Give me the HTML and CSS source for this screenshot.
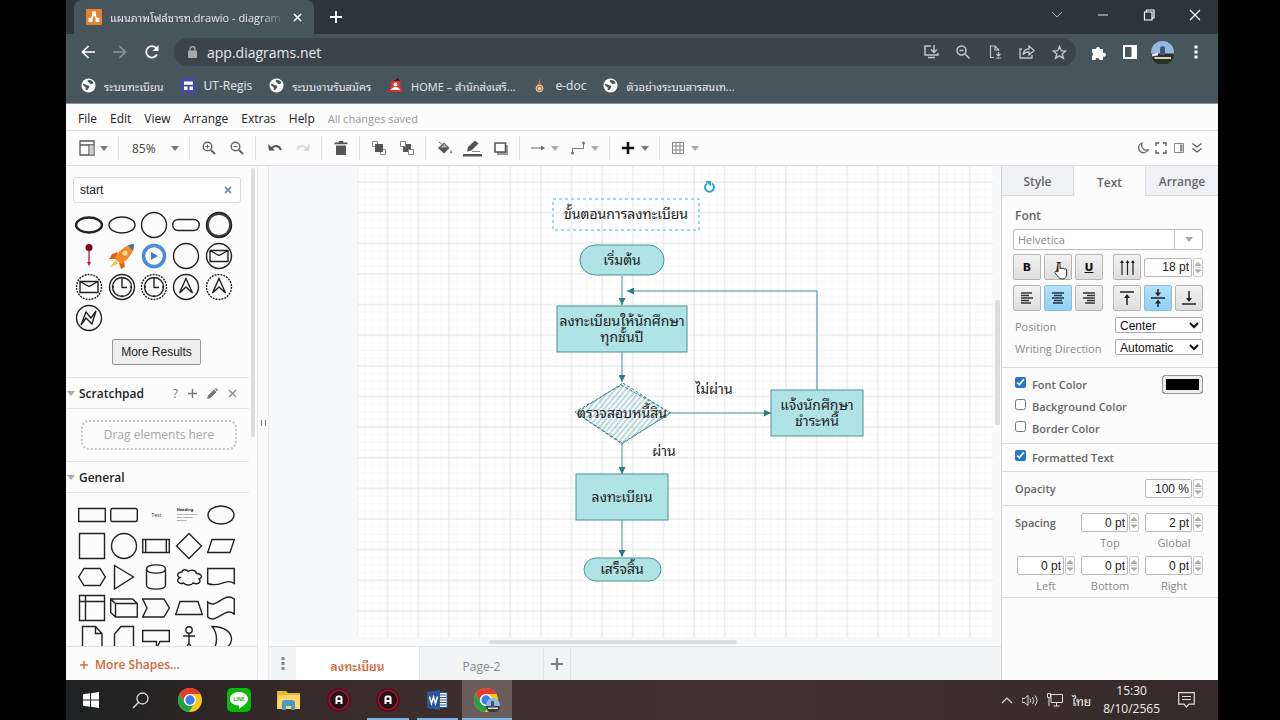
FILE: index.html
```html
<!doctype html>
<html lang="th">
<head>
    <meta charset="UTF-8">
    <meta name="viewport" content="width=device-width, initial-scale=1.0">
    <title>แผนภาพโฟล์ชารท.drawio - diagrams.net</title>
    <link rel="stylesheet" href="styles.css">
</head>
<body>
    <svg class="defs" width="0" height="0">
        <symbol id="caret" viewBox="0 0 8 5"><path d="M0 0h8L4 5z" fill="currentColor"/></symbol>
        <symbol id="globe" viewBox="0 0 16 16">
            <circle cx="8" cy="8" r="7.5" fill="#fff"/>
            <path d="M2 6.500C5 6 5.500 8 8 8c1 .5 1.500 2 0 3-.5 1.500-2 2.500-3 1.500L5 10 2 7.500zM7.500 2.500c2-1 5 .5 6 3-2 .5-3.500 1.500-4.500 0S6 4.500 7.500 2.500z" fill="#47565d"/>
        </symbol>
        <symbol id="spin" viewBox="0 0 10 19">
            <path d="M0 9.500h10" stroke="#ccc"/>
            <path d="M1.500 7L5 3l3.500 4zM1.500 12.500L5 16l3.500-3.500z" fill="#bbb" stroke="#888" stroke-width=".8"/>
        </symbol>
        <symbol id="chrome" viewBox="0 0 24 24">
            <circle cx="12" cy="12" r="12" fill="#fbc816"/>
            <path d="M1.600 6A12 12 0 0 1 22.400 6H12a6 6 0 0 0-5.500 8z" fill="#e33b2e"/>
            <path d="M1.600 6A12 12 0 0 0 11 24l5.500-8.500A6 6 0 0 1 6.800 15z" fill="#22a04b"/>
            <circle cx="12" cy="12" r="6" fill="#fff"/>
            <circle cx="12" cy="12" r="4.700" fill="#3b7ded"/>
        </symbol>
        <symbol id="rec" viewBox="0 0 24 24">
            <circle cx="12" cy="12" r="12" fill="#5e0d1c"/>
            <circle cx="12" cy="12" r="9.500" fill="#241216" stroke="#b5173a" stroke-width="1.200"/>
            <path d="M9.500 16V10a1.500 1.500 0 0 1 1.500-1.500h2A1.500 1.500 0 0 1 14.500 10v6M9.500 13h5" fill="none" stroke="#fff" stroke-width="2"/>
        </symbol>
        <symbol id="clock" viewBox="0 0 28 28">
            <circle cx="14" cy="14" r="9.500"/><path d="M14 6v8.500h5M14 4.500v1.500M14 22v1.500M4.500 14h1.500M22 14h1.500"/>
        </symbol>
    </svg>

    <header class="browser">
        <div class="titlebar">
            <div class="tab">
                <svg width="16" height="16" viewBox="0 0 16 16"><rect width="16" height="16" rx="1" fill="#e8832d"/><path d="M8 5L4.500 11M8 5l3.500 6" stroke="#fff" stroke-width="1.500"/><path d="M6 2.500h4V7H6zM2.500 9h4v4h-4zM9.500 9h4v4h-4z" fill="#fff"/></svg>
                <span class="tab-title">แผนภาพโฟล์ชารท.drawio - diagram</span>
                <button class="plain" aria-label="Close tab"><svg width="9" height="9" viewBox="0 0 9 9"><path d="M1 1l7 7M8 1L1 8" stroke="#fff" stroke-width="1.600"/></svg></button>
            </div>
            <button class="plain new-tab" aria-label="New tab"><svg width="12" height="12" viewBox="0 0 12 12"><path d="M6 0v12M0 6h12" stroke="#fff" stroke-width="1.800"/></svg></button>
            <div class="window-buttons">
                <button class="plain" aria-label="Search tabs"><svg width="12" height="12" viewBox="0 0 12 12"><path d="M1 3l5 5 5-5" fill="none" stroke="#a9b1b5"/></svg></button>
                <button class="plain" aria-label="Minimize"><svg width="12" height="12" viewBox="0 0 12 12"><path d="M1 6h10" stroke="#e3e6e8"/></svg></button>
                <button class="plain" aria-label="Restore"><svg width="12" height="12" viewBox="0 0 12 12"><path d="M1.500 3h7.500v8H1.500zM3.500 3V1h7.500v8H9" fill="none" stroke="#fff" stroke-width="1.200"/></svg></button>
                <button class="plain" aria-label="Close"><svg width="12" height="12" viewBox="0 0 12 12"><path d="M1 1l10 10M11 1L1 11" stroke="#fff" stroke-width="1.200"/></svg></button>
            </div>
        </div>
        <div class="navbar">
            <button class="plain nav" aria-label="Back"><svg width="14" height="14" viewBox="0 0 14 14"><path d="M14 7H2M7.500 1L1.500 7l6 6" fill="none" stroke="#fff" stroke-width="1.700"/></svg></button>
            <button class="plain nav" aria-label="Forward"><svg width="14" height="14" viewBox="0 0 14 14"><path d="M0 7h12M6.500 1l6 6-6 6" fill="none" stroke="#8d989d" stroke-width="1.500"/></svg></button>
            <button class="plain nav" aria-label="Reload"><svg width="14" height="14" viewBox="0 0 14 14"><path d="M12 9.500A5.700 5.700 0 1 1 11.500 3.500" fill="none" stroke="#fff" stroke-width="1.800"/><path d="M13.500 0v6h-6z" fill="#fff"/></svg></button>
            <div class="omnibox">
                <svg width="9" height="12" viewBox="0 0 9 12"><rect y="4.500" width="9" height="7.500" rx="1" fill="#a5abae"/><path d="M2 5V3a2.500 2.500 0 0 1 5 0v2" fill="none" stroke="#a5abae" stroke-width="1.300"/></svg>
                <input type="text" value="app.diagrams.net" aria-label="Address">
                <button class="plain" aria-label="Install"><svg width="15" height="14" viewBox="0 0 15 14"><path d="M7 1H1v9h13V8M4 12.500h7M10 0v7M7 4.500L10 7.500l3-3" fill="none" stroke="#c2c7c9" stroke-width="1.500"/></svg></button>
                <button class="plain" aria-label="Zoom"><svg width="14" height="14" viewBox="0 0 14 14"><circle cx="5.500" cy="5.500" r="4.500" fill="none" stroke="#c2c7c9" stroke-width="1.500"/><path d="M9 9l4.500 4.500M3.500 5.500h4" stroke="#c2c7c9" stroke-width="1.500"/></svg></button>
                <button class="plain" aria-label="Offline"><svg width="13" height="14" viewBox="0 0 13 14"><path d="M5 12.500H1.500V1H6l3.500 3.500V6M6 1v4h3.500M9.500 7v4M7.500 9l2 2 2-2M7 13h5" fill="none" stroke="#c2c7c9" stroke-width="1.200"/></svg></button>
                <button class="plain" aria-label="Share"><svg width="16" height="14" viewBox="0 0 16 14"><path d="M3 4H1v9h12v-3M4 9.500C4.500 6 7 4 10 4V1l5 4.500L10 10V7C7.500 7 5.500 7.500 4 9.500z" fill="none" stroke="#c2c7c9" stroke-width="1.300"/></svg></button>
                <button class="plain" aria-label="Bookmark"><svg width="15" height="15" viewBox="0 0 15 15"><path d="M7.500 1.500l1.700 4.200 4.500.3-3.500 2.900 1.200 4.400-3.900-2.500-3.900 2.500 1.200-4.400L1.300 6l4.500-.3z" fill="none" stroke="#c2c7c9" stroke-width="1.400"/></svg></button>
            </div>
            <button class="plain ext" aria-label="Extensions"><svg width="15" height="15" viewBox="0 0 15 15"><path d="M1 4h4a2 2 0 1 1 4 0h3v4a2 2 0 1 1 0 3.500V15H8.500a2 2 0 0 0-4 0H1v-4a2 2 0 0 0 0-3.500z" fill="#fff"/></svg></button>
            <button class="plain ext" aria-label="Side panel"><svg width="14" height="14" viewBox="0 0 14 14"><path d="M1 1h12v12H1z" fill="none" stroke="#fff" stroke-width="2"/><path d="M8.500 1H13v12H8.500z" fill="#fff"/></svg></button>
            <button class="plain ext" aria-label="Profile"><svg width="23" height="23" viewBox="0 0 23 23"><circle cx="11.500" cy="11.500" r="11.500" fill="#92b8e0"/><path d="M0 12.500h23A11.500 11.500 0 0 1 0 12.500z" fill="#2c3126"/><path d="M1 13l6-1.500v3l-6 1z" fill="#dfe7ea"/><path d="M9 14V7c0-2.500 5-2.500 5 0v7z" fill="#3d5878"/><path d="M3 16h17v2H4z" fill="#d9d2bd"/></svg></button>
            <button class="plain ext" aria-label="Menu"><svg width="4" height="14" viewBox="0 0 4 14"><path d="M.5.500h3v3h-3zM.5 5.500h3v3h-3zM.5 10.500h3v3h-3z" fill="#fff"/></svg></button>
        </div>
        <nav class="bookmarks">
            <a class="thai" href="#"><svg width="15" height="15"><use href="#globe"/></svg>ระบบทะเบียน</a>
            <a href="#"><svg width="15" height="15" viewBox="0 0 15 15"><rect width="15" height="15" rx="1" fill="#4249a8"/><path d="M3 3.500h9v3.200H3zM3 8.500h3.500V12H3zM8.500 8.500H12V12H8.500z" fill="#fff"/></svg>UT-Regis</a>
            <a class="thai" href="#"><svg width="15" height="15"><use href="#globe"/></svg>ระบบงานรับสมัคร</a>
            <a class="thai" href="#"><svg width="15" height="15" viewBox="0 0 15 15"><path d="M2.500 4L8 0l5 3-1 4 1 3 1.500 4H.500L2 10l1.500-3z" fill="#e0312b"/><path d="M5 3l5-3 2 3z" fill="#242424"/><circle cx="7.500" cy="6.500" r="2" fill="#fff"/><path d="M3 12c1-4 8-4 9 0z" fill="#fff"/></svg>HOME – สำนักส่งเสริ...</a>
            <a href="#"><svg width="15" height="15" viewBox="0 0 15 15"><path d="M7.500 0l.8 4.500 2.700 3.500a4 4 0 1 1-7 0l2.700-3.500z" fill="#c4703a"/><circle cx="7.500" cy="10.500" r="3.300" fill="none" stroke="#d8d3c6"/><circle cx="7.500" cy="10.500" r="1.500" fill="#f1d9ad"/></svg>e-doc</a>
            <a class="thai" href="#"><svg width="15" height="15"><use href="#globe"/></svg>ตัวอย่างระบบสารสนเท...</a>
        </nav>
    </header>

    <main class="app">
        <nav class="menubar">
            <a href="#">File</a>
            <a href="#">Edit</a>
            <a href="#">View</a>
            <a href="#">Arrange</a>
            <a href="#">Extras</a>
            <a href="#">Help</a>
            <span class="status">All changes saved</span>
        </nav>

        <div class="toolbar">
            <div class="group first">
                <button class="plain drop" aria-label="View"><span><svg width="16" height="16" viewBox="0 0 16 16"><path d="M1 1h14v14H1zM1 5h14M10 5v10" fill="none" stroke="#555" stroke-width="1.300"/><path d="M10.500 5.500H14.500v9h-4z" fill="#ccc"/></svg></span><svg class="caret"><use href="#caret"/></svg></button>
            </div>
            <div class="group">
                <button class="plain zoom">85%<svg class="caret"><use href="#caret"/></svg></button>
            </div>
            <div class="group">
                <button class="plain tool" aria-label="Zoom in"><svg width="14" height="14" viewBox="0 0 14 14"><circle cx="5.500" cy="5.500" r="4.300" fill="none" stroke="#666" stroke-width="1.500"/><path d="M9 9l4 4" stroke="#666" stroke-width="2"/><path d="M3.500 5.500h4M5.500 3.500v4" stroke="#666"/></svg></button>
                <button class="plain tool" aria-label="Zoom out"><svg width="14" height="14" viewBox="0 0 14 14"><circle cx="5.500" cy="5.500" r="4.300" fill="none" stroke="#666" stroke-width="1.500"/><path d="M9 9l4 4" stroke="#666" stroke-width="2"/><path d="M3.500 5.500h4" stroke="#666"/></svg></button>
            </div>
            <div class="group">
                <button class="plain tool" aria-label="Undo"><svg width="14" height="10" viewBox="0 0 14 10"><path d="M0 1l1 6.500h6z" fill="#555"/><path d="M3.500 5.500C6 2 11 2 13 7" fill="none" stroke="#555" stroke-width="2"/></svg></button>
                <button class="plain tool" aria-label="Redo"><svg width="14" height="10" viewBox="0 0 14 10"><path d="M14 1l-1 6.500H7z" fill="#d2d2d2"/><path d="M10.500 5.500C8 2 3 2 1 7" fill="none" stroke="#d2d2d2" stroke-width="1.500"/></svg></button>
            </div>
            <div class="group">
                <button class="plain tool" aria-label="Delete"><svg width="14" height="14" viewBox="0 0 14 14"><path d="M.5 1.500h4L5 0h4l.5 1.500h4v1.800H.5zM2 4.500h10V14H2z" fill="#555"/></svg></button>
            </div>
            <div class="group">
                <button class="plain tool" aria-label="To front"><svg width="14" height="14" viewBox="0 0 14 14"><path d="M.5.500h5v5h-5zM8.500 8.500h5v5h-5z" fill="#fff" stroke="#888"/><path d="M3 3h8v8H3z" fill="#555"/></svg></button>
                <button class="plain tool" aria-label="To back"><svg width="14" height="14" viewBox="0 0 14 14"><path d="M3 3h8v8H3z" fill="#555"/><path d="M.5.500h5v5h-5zM8.500 8.500h5v5h-5z" fill="#fff" stroke="#888"/></svg></button>
            </div>
            <div class="group">
                <button class="plain tool" aria-label="Fill color"><svg width="16" height="14" viewBox="0 0 16 14"><path d="M1 7l6-5.500L12.500 7 7 12.500z" fill="#555"/><path d="M2 1l5 4M3.500 6.200L7 2.800l3.500 3.400z" stroke="#777" fill="#ddd"/><path d="M14 9c1.500 2 1.500 3.500 0 3.500S12.500 11 14 9z" fill="#888"/></svg></button>
                <button class="plain tool" aria-label="Line color"><svg width="20" height="17" viewBox="0 0 20 17"><path d="M4 11.500l1-4.500 7-6.500 3.500 3L8.500 10.500z" fill="#555"/><path d="M9 11.500h8" stroke="#888"/><path d="M0 14h19v2.500H0z" fill="#555"/></svg></button>
                <button class="plain tool" aria-label="Shadow"><svg width="14" height="13" viewBox="0 0 14 13"><path d="M3 3h11v10H3z" fill="#999"/><path d="M1 1h10.500v9H1z" fill="#fff" stroke="#555" stroke-width="1.600"/></svg></button>
            </div>
            <div class="group">
                <button class="plain drop" aria-label="Connection"><span><svg width="14" height="6" viewBox="0 0 14 6"><path d="M0 3h11" stroke="#666"/><path d="M10 .500L14 3l-4 2.500z" fill="#666"/></svg></span><svg class="caret light"><use href="#caret"/></svg></button>
                <button class="plain drop" aria-label="Waypoints"><span><svg width="14" height="14" viewBox="0 0 14 14"><path d="M1.500 12V7.500h11V2" fill="none" stroke="#777"/><circle cx="1.500" cy="12" r="1.500" fill="#777"/><circle cx="12.500" cy="2" r="1.500" fill="#777"/></svg></span><svg class="caret light"><use href="#caret"/></svg></button>
            </div>
            <div class="group">
                <button class="plain drop" aria-label="Insert"><span><svg width="12" height="12" viewBox="0 0 12 12"><path d="M6 0v12M0 6h12" stroke="#111" stroke-width="2.600"/></svg></span><svg class="caret"><use href="#caret"/></svg></button>
            </div>
            <div class="group">
                <button class="plain drop" aria-label="Table"><span><svg width="12" height="12" viewBox="0 0 12 12"><path d="M.5.500h11v11H.5zM.5 4h11M.5 8h11M4 .5v11M8 .5v11" fill="none" stroke="#888"/></svg></span><svg class="caret light"><use href="#caret"/></svg></button>
            </div>
            <div class="view-buttons">
                <button class="plain" aria-label="Dark mode"><svg width="12" height="12" viewBox="0 0 12 12"><path d="M5 1a5 5 0 1 0 6 7C7 9 3.500 5.500 5 1z" fill="none" stroke="#666" stroke-width="1.300"/></svg></button>
                <button class="plain" aria-label="Fullscreen"><svg width="12" height="12" viewBox="0 0 12 12"><path d="M1 4V1h3M8 1h3v3M11 8v3H8M4 11H1V8" fill="none" stroke="#555" stroke-width="1.300"/></svg></button>
                <button class="plain" aria-label="Format panel"><svg width="12" height="12" viewBox="0 0 12 12"><path d="M1.500 1.500h9v9h-9z" fill="none" stroke="#888"/><path d="M7 2.500h2.500v7H7z" fill="#888"/></svg></button>
                <button class="plain" aria-label="Collapse"><svg width="12" height="12" viewBox="0 0 12 12"><path d="M1.500 1.500L6 5l4.500-3.500M1.500 6.500L6 10l4.500-3.500" fill="none" stroke="#555" stroke-width="1.300"/></svg></button>
            </div>
        </div>

        <div class="workspace">
            <aside class="sidebar">
                <div class="palettes">
                    <div class="search">
                        <input type="text" value="start" aria-label="Search shapes">
                        <button class="plain" aria-label="Clear search"><svg width="8" height="8" viewBox="0 0 8 8"><path d="M1 1l6 6M7 1L1 7" stroke="#7195b4" stroke-width="1.800"/></svg></button>
                    </div>
                    <div class="shapes results">
                        <svg viewBox="0 0 28 28"><ellipse cx="14" cy="14" rx="13" ry="7.500" stroke-width="2.400"/></svg>
                        <svg viewBox="0 0 28 28"><ellipse cx="14" cy="14" rx="13" ry="8"/></svg>
                        <svg viewBox="0 0 28 28"><circle cx="14" cy="14" r="12.500"/></svg>
                        <svg viewBox="0 0 28 28"><rect x=".7" y="8.500" width="26.600" height="11" rx="5.500"/></svg>
                        <svg viewBox="0 0 28 28"><circle cx="14" cy="14" r="11.500" stroke="#444" stroke-width="2.800"/><circle cx="14" cy="14" r="12.500"/></svg>
                        <svg viewBox="0 0 28 28"><path d="M14 6v17" stroke="#c0204a"/><path d="M12 20l2 4 2-4z" fill="#c0204a" stroke="none"/><circle cx="14" cy="5.500" r="3.500" fill="#7d0018" stroke="none"/></svg>
                        <svg viewBox="0 0 28 28"><g stroke="none"><path d="M8 18l-6 7 8-3z" fill="#f8c02c"/><path d="M10 10l-6 2-3 5 7 0zM16 20l1 5-4 2-2-6z" fill="#e2621b"/><path d="M7 17C10 9 17 3 26 2c0 8-5 15-13 20z" fill="#f58a25"/><path d="M20 3l6-1-1 7z" fill="#3872b8"/><circle cx="17" cy="11" r="2.600" fill="#fde0a0"/></g></svg>
                        <svg viewBox="0 0 28 28"><circle cx="14" cy="14" r="10.500" stroke="#4b8add" stroke-width="3.600"/><path d="M11 10l7 4-7 4z" fill="#3c7cd4" stroke="none"/></svg>
                        <svg viewBox="0 0 28 28"><circle cx="14" cy="14" r="12.500"/></svg>
                        <svg viewBox="0 0 28 28"><circle cx="14" cy="14" r="12.500"/><path d="M5 8.500h18v11H5zM5 8.500l9 5 9-5"/></svg>
                        <svg viewBox="0 0 28 28"><circle cx="14" cy="14" r="12.500" stroke-dasharray="2 1"/><path d="M5 8.500h18v11H5zM5 8.500l9 5 9-5"/></svg>
                        <svg viewBox="0 0 28 28"><circle cx="14" cy="14" r="12.500"/><use href="#clock"/></svg>
                        <svg viewBox="0 0 28 28"><circle cx="14" cy="14" r="12.500" stroke-dasharray="2 1"/><use href="#clock"/></svg>
                        <svg viewBox="0 0 28 28"><circle cx="14" cy="14" r="12.500"/><path d="M14 5.500L20.500 20 14 14l-6.500 6z"/></svg>
                        <svg viewBox="0 0 28 28"><circle cx="14" cy="14" r="12.500" stroke-dasharray="2 1"/><path d="M14 5.500L20.500 20 14 14l-6.500 6z"/></svg>
                        <svg viewBox="0 0 28 28"><circle cx="14" cy="14" r="12.500"/><path d="M6 21l5-13 5 6 5-7-4 13-6-6z"/></svg>
                    </div>
                    <button class="more-results">More Results</button>

                    <div class="section-title">
                        <svg class="caret light"><use href="#caret"/></svg>
                        <h2>Scratchpad</h2>
                        <button class="plain">?</button>
                        <button class="plain" aria-label="Add"><svg width="9" height="9" viewBox="0 0 9 9"><path d="M4.500 0v9M0 4.500h9" stroke="#777" stroke-width="1.400"/></svg></button>
                        <button class="plain" aria-label="Edit"><svg width="11" height="11" viewBox="0 0 11 11"><path d="M0 11l1-3.500L7 1.500 9.500 4l-6 6zM7.700 1L9 0l2 2-1 1.300z" fill="#777"/></svg></button>
                        <button class="plain" aria-label="Close"><svg width="9" height="9" viewBox="0 0 9 9"><path d="M1 1l7 7M8 1L1 8" stroke="#888" stroke-width="1.300"/></svg></button>
                    </div>
                    <div class="scratch"><div class="drag-here">Drag elements here</div></div>

                    <div class="section-title">
                        <svg class="caret light"><use href="#caret"/></svg>
                        <h2>General</h2>
                    </div>
                    <div class="shapes general">
                        <svg viewBox="0 0 28 28"><path d="M.7 7.500h26.600v13H.7z"/></svg>
                        <svg viewBox="0 0 28 28"><rect x=".7" y="7.500" width="26.600" height="13" rx="2"/></svg>
                        <span class="mini-text">Text</span>
                        <span class="mini-heading"><b>Heading</b>Lorem ipsum dolor sit amet, consectetur adipisicing</span>
                        <svg viewBox="0 0 28 28"><ellipse cx="14" cy="14" rx="13" ry="9"/></svg>
                        <svg viewBox="0 0 28 28"><path d="M1.500 1.500h25v25h-25z"/></svg>
                        <svg viewBox="0 0 28 28"><circle cx="14" cy="14" r="12.500"/></svg>
                        <svg viewBox="0 0 28 28"><path d="M.7 7.500h26.600v13H.7zM3.700 7.500v13M24.300 7.500v13"/></svg>
                        <svg viewBox="0 0 28 28"><path d="M14 1.500L26.500 14 14 26.500 1.500 14z"/></svg>
                        <svg viewBox="0 0 28 28"><path d="M5 7.500h22.300L23 20.500H.7z"/></svg>
                        <svg viewBox="0 0 28 28"><path d="M6 5.500h16l5.300 8.500L22 22.500H6L.7 14z"/></svg>
                        <svg viewBox="0 0 28 28"><path d="M4.500 2.500L23.500 14 4.500 26z"/></svg>
                        <svg viewBox="0 0 28 28"><path d="M4.500 6v16c0 5.500 19 5.500 19 0V6M4.500 6c0-5.500 19-5.500 19 0s-19 5.500-19 0"/></svg>
                        <svg viewBox="0 0 28 28"><path d="M7 9C3 9 .5 13 5 14.500 0 17 4 22 8.500 20c3 3 8 2.500 9.500 0 5 2 9-1 6-4 5-2 1.500-6-2.500-5.500-1-4-6-4-8-2C11 6 7.500 6 7 9z"/></svg>
                        <svg viewBox="0 0 28 28"><path d="M.7 5.500h26.600v15c-9-6-14 5-26.600 0z"/></svg>
                        <svg viewBox="0 0 28 28"><path d="M1.500 1.500h25v25h-25zM1.500 7.500h25M7.500 1.500v25"/></svg>
                        <svg viewBox="0 0 28 28"><path d="M.7 5h22l4.600 4.500V23H5.500L.7 18.500zM.7 5l4.800 4.500h21.800M5.500 9.500V23"/></svg>
                        <svg viewBox="0 0 28 28"><path d="M.7 5H22l5.300 9L22 23H.7L5 14z"/></svg>
                        <svg viewBox="0 0 28 28"><path d="M5 7.500h18l4.300 13H.7z"/></svg>
                        <svg viewBox="0 0 28 28"><path d="M.7 8c9 8 16-11 26.600-3v15C18 12 9 31 .7 23z"/></svg>
                        <svg viewBox="0 0 28 28"><path d="M4.500 1.500h13l6.500 7v19.500H4.500zM17.500 1.500v7H24"/></svg>
                        <svg viewBox="0 0 28 28"><path d="M11 1.500h12.500V28h-19V9z"/></svg>
                        <svg viewBox="0 0 28 28"><path d="M.7 5.500h26.600v11H18l-3.500 7v-7H.7z"/></svg>
                        <svg viewBox="0 0 28 28"><circle cx="14" cy="5" r="3.200"/><path d="M14 8v10M8 11h12M14 18l-5 9M14 18l5 9"/></svg>
                        <svg viewBox="0 0 28 28"><path d="M5 1.500c26 0 26 25 0 25 6-7 6-18 0-25z"/></svg>
                    </div>
                    <span class="thumb side-thumb"></span>
                </div>
                <a class="more-shapes" href="#"><svg width="8" height="8" viewBox="0 0 8 8"><path d="M4 0v8M0 4h8" stroke="currentColor" stroke-width="1.400"/></svg>More Shapes...</a>
            </aside>
            <div class="splitter"></div>

            <section class="editor">
                <div class="canvas">
                    <svg class="diagram">
                        <defs>
                            <pattern id="grid" width="40" height="40" patternUnits="userSpaceOnUse" patternTransform="translate(88 16) scale(.766)">
                                <path d="M10 0v40M20 0v40M30 0v40M0 10h40M0 20h40M0 30h40" stroke="#f5f5f6"/>
                                <path d="M0 0v40M40 0v40M0 0h40M0 40h40" stroke="#e0e1e3" stroke-width="1.300"/>
                            </pattern>
                            <pattern id="hatch" width="4" height="4" patternUnits="userSpaceOnUse" patternTransform="rotate(40)">
                                <path d="M1 0v4" stroke="#7db9bc"/>
                            </pattern>
                            <marker id="arrow" markerWidth="8" markerHeight="7" refX="7" refY="3.500" orient="auto" markerUnits="userSpaceOnUse"><path d="M0 0l7 3.500L0 7z" fill="#2c7d80"/></marker>
                        </defs>
                        <rect x="88" width="100%" height="100%" fill="#fff"/>
                        <rect x="88" width="100%" height="100%" fill="url(#grid)"/>
                        <g class="edges">
                            <path d="M353 110v29"/>
                            <path d="M353 186v30"/>
                            <path d="M353 278v30"/>
                            <path d="M353 354v37"/>
                            <path d="M402 247h100"/>
                            <path d="M548 224V125H358"/>
                        </g>
                        <g class="nodes">
                            <rect x="311" y="79" width="84" height="30" rx="15"/>
                            <rect x="288" y="140" width="130" height="46"/>
                            <rect x="502" y="224" width="92" height="46"/>
                            <rect x="307" y="308" width="92" height="46"/>
                            <rect x="315" y="392" width="77" height="23" rx="12"/>
                        </g>
                        <path class="sketch" d="M354 217l47 30-48 31-46-31z" fill="url(#hatch)"/>
                        <path class="sketch" d="M352 219l50 28-49 30-47-31z" fill="none"/>
                        <rect class="selection" x="284" y="33" width="146" height="31"/>
                        <path d="M443 17.500a4.500 4.500 0 1 1-5 0" fill="none" stroke="#29a3dc" stroke-width="2"/>
                        <path d="M436 15h6v5.500z" fill="#29a3dc"/>
                        <g class="labels">
                            <text x="357" y="53">ขั้นตอนการลงทะเบียน</text>
                            <text x="353" y="99">เริ่มต้น</text>
                            <text x="353" y="160">ลงทะเบียนให้นักศึกษา</text>
                            <text x="353" y="176">ทุกชั้นปี</text>
                            <text x="353" y="252">ตรวจสอบหนี้สิน</text>
                            <text x="445" y="228">ไม่ผ่าน</text>
                            <text x="395" y="290">ผ่าน</text>
                            <text x="548" y="244">แจ้งนักศึกษา</text>
                            <text x="548" y="260">ชำระหนี้</text>
                            <text x="353" y="336">ลงทะเบียน</text>
                            <text x="353" y="408">เสร็จสิ้น</text>
                        </g>
                    </svg>
                    <span class="thumb right-thumb"></span>
                    <span class="thumb bottom-thumb"></span>
                </div>
                <nav class="pages">
                    <button class="plain pages-menu" aria-label="Pages"><svg width="4" height="13" viewBox="0 0 4 13"><path d="M.5 0h3v3h-3zM.5 5h3v3h-3zM.5 10h3v3h-3z" fill="#888"/></svg></button>
                    <a class="page active" href="#">ลงทะเบียน</a>
                    <a class="page" href="#">Page-2</a>
                    <button class="plain add-page" aria-label="Insert page"><svg width="12" height="12" viewBox="0 0 12 12"><path d="M6 0v12M0 6h12" stroke="#808080" stroke-width="2.200"/></svg></button>
                </nav>
            </section>

            <aside class="format">
                <div class="format-tabs">
                    <button class="plain">Style</button>
                    <button class="plain active">Text</button>
                    <button class="plain">Arrange</button>
                </div>
                <div class="panel font-panel">
                    <h3>Font</h3>
                    <button class="font-family"><span>Helvetica</span><i><svg class="caret light"><use href="#caret"/></svg></i></button>
                    <div class="row">
                        <div class="button-set">
                            <button class="btn bold">B</button>
                            <button class="btn italic">I</button>
                            <button class="btn underline">U</button>
                        </div>
                        <div class="button-set">
                            <button class="btn" aria-label="Vertical text"><svg width="17" height="16" viewBox="0 0 17 16"><path d="M3 2v14M8.500 2v14M14 2v14" stroke="#222" stroke-width="1.200"/><path d="M1 4l2-3 2 3zM6.500 4l2-3 2 3zM12 4l2-3 2 3z" fill="#222"/></svg></button>
                            <div class="number size"><input type="text" value="18 pt" aria-label="Font size"><svg><use href="#spin"/></svg></div>
                        </div>
                        <svg class="pointer" width="14" height="18" viewBox="0 0 14 18"><path d="M4 10V2c0-1.500 2-1.500 2 0v5c0-1.500 2-1.500 2.200 0 .3-1.300 2-1.200 2.200.3.500-1 2.200-.8 2.200.7v4c0 3-1.500 5-4 5S5 16 4 14.500L1 11c-1-1.500 1-2.500 3-1z" fill="#fff" stroke="#333"/></svg>
                    </div>
                    <div class="row">
                        <div class="button-set">
                            <button class="btn" aria-label="Left"><svg width="14" height="12" viewBox="0 0 14 12"><path d="M1 1h11M1 3.500h8M1 6h12M1 8.500h8M1 11h10" stroke="#333" stroke-width="1.400"/></svg></button>
                            <button class="btn on" aria-label="Center"><svg width="14" height="12" viewBox="0 0 14 12"><path d="M1 1h12M3 3.500h8M1 6h12M3 8.500h8M2 11h10" stroke="#234" stroke-width="1.400"/></svg></button>
                            <button class="btn" aria-label="Right"><svg width="14" height="12" viewBox="0 0 14 12"><path d="M1 1h12M5 3.500h8M1 6h12M5 8.500h8M3 11h10" stroke="#333" stroke-width="1.400"/></svg></button>
                        </div>
                        <div class="button-set">
                            <button class="btn" aria-label="Top"><svg width="14" height="14" viewBox="0 0 14 14"><path d="M0 1h14M7 5v9" stroke="#222" stroke-width="1.500"/><path d="M4 7l3-4 3 4z" fill="#222"/></svg></button>
                            <button class="btn on" aria-label="Middle"><svg width="14" height="18" viewBox="0 0 14 18"><path d="M0 9h14M7 0v4M7 14v4" stroke="#222" stroke-width="1.500"/><path d="M4 3.500l3 4 3-4zM4 14.500l3-4 3 4z" fill="#222"/></svg></button>
                            <button class="btn" aria-label="Bottom"><svg width="14" height="14" viewBox="0 0 14 14"><path d="M0 13h14M7 0v8" stroke="#222" stroke-width="1.500"/><path d="M4 7l3 4 3-4z" fill="#222"/></svg></button>
                        </div>
                    </div>
                    <div class="row option">
                        <label for="position">Position</label>
                        <select id="position"><option>Center</option></select>
                    </div>
                    <div class="row option">
                        <label for="direction">Writing Direction</label>
                        <select id="direction"><option>Automatic</option></select>
                    </div>
                </div>
                <div class="panel checks">
                    <div class="check">
                        <input type="checkbox" id="font-color" checked><label for="font-color">Font Color</label>
                        <button class="swatch" aria-label="Black"></button>
                    </div>
                    <div class="check"><input type="checkbox" id="background-color"><label for="background-color">Background Color</label></div>
                    <div class="check"><input type="checkbox" id="border-color"><label for="border-color">Border Color</label></div>
                </div>
                <div class="panel formatted">
                    <div class="check"><input type="checkbox" id="formatted" checked><label for="formatted">Formatted Text</label></div>
                </div>
                <div class="panel opacity">
                    <label for="opacity-value">Opacity</label>
                    <div class="number"><input type="text" id="opacity-value" value="100 %"><svg><use href="#spin"/></svg></div>
                </div>
                <div class="panel spacing">
                    <h3>Spacing</h3>
                    <div class="field"><div class="number"><input type="text" id="top" value="0 pt"><svg><use href="#spin"/></svg></div><label for="top">Top</label></div>
                    <div class="field"><div class="number"><input type="text" id="global" value="2 pt"><svg><use href="#spin"/></svg></div><label for="global">Global</label></div>
                    <div class="field"><div class="number"><input type="text" id="left" value="0 pt"><svg><use href="#spin"/></svg></div><label for="left">Left</label></div>
                    <div class="field"><div class="number"><input type="text" id="bottom" value="0 pt"><svg><use href="#spin"/></svg></div><label for="bottom">Bottom</label></div>
                    <div class="field"><div class="number"><input type="text" id="right" value="0 pt"><svg><use href="#spin"/></svg></div><label for="right">Right</label></div>
                </div>
            </aside>
        </div>
    </main>

    <footer class="taskbar">
        <div class="tasks">
            <button class="plain" aria-label="Start"><svg width="16" height="16" viewBox="0 0 16 16"><path d="M0 2.300l7-1v6.200H0zM8 1.200L16 0v7.500H8zM0 8.500h7v6.200l-7-1zM8 8.500h8V16l-8-1.200z" fill="#fff"/></svg></button>
            <button class="plain" aria-label="Search"><svg width="17" height="17" viewBox="0 0 17 17"><circle cx="10.500" cy="6.500" r="5.500" fill="none" stroke="#ddd" stroke-width="1.300"/><path d="M6.500 10.500L1 16" stroke="#ddd" stroke-width="1.500"/></svg></button>
            <button class="plain" aria-label="Chrome"><svg width="24" height="24"><use href="#chrome"/></svg></button>
            <button class="plain" aria-label="Line"><svg width="24" height="24" viewBox="0 0 24 24"><rect width="24" height="24" rx="5" fill="#0bb60b"/><path d="M12 4c5 0 9 3 9 7 0 4-4 6-9 10v-3.500c-5 0-9-2.500-9-6.500s4-7 9-7z" fill="#fff"/><text x="12" y="13" text-anchor="middle" class="line-logo">LINE</text></svg></button>
            <button class="plain" aria-label="Explorer"><svg width="23" height="20" viewBox="0 0 23 20"><path d="M0 1h9l2 2h12v16H0z" fill="#eab42f"/><path d="M1 5h22v14H0z" fill="#ffd765"/><path d="M5 20v-7c0-2 1-3 3-3h7c2 0 3 1 3 3v7h-4v-4H9v4z" fill="#4a97c9"/></svg></button>
            <button class="plain" aria-label="Recorder"><svg width="24" height="24"><use href="#rec"/></svg></button>
            <button class="plain open" aria-label="Recorder window"><svg width="24" height="24"><use href="#rec"/></svg></button>
            <button class="plain open" aria-label="Word"><svg width="21" height="20" viewBox="0 0 21 20"><path d="M10 2.500h10v15H10z" fill="#fff" stroke="#2b579a"/><path d="M13 5h6M13 7.500h6M13 10h6M13 12.500h6M13 15h6" stroke="#2b579a"/><path d="M0 2l13-2v20L0 18z" fill="#2b579a"/><path d="M2.500 6.500l2 7 2-6.500 2 6.500 2-7" fill="none" stroke="#fff" stroke-width="1.400"/></svg></button>
            <button class="plain open focused" aria-label="Chrome window"><svg width="27" height="24" viewBox="0 0 27 24"><use href="#chrome" width="24" height="24"/><circle cx="19" cy="17" r="7" fill="#8fb7de"/><path d="M12 18h14a7 7 0 0 1-14 0z" fill="#333a3a"/><path d="M17 19v-5c0-1.500 3-1.500 3 0v5z" fill="#34506f"/><path d="M14 19.500h10v1.500H14z" fill="#e3e0d4"/></svg></button>
        </div>
        <div class="tray">
            <svg width="12" height="7" viewBox="0 0 12 7"><path d="M1 6l5-5 5 5" fill="none" stroke="#ddd" stroke-width="1.200"/></svg>
            <svg width="16" height="13" viewBox="0 0 16 13"><path d="M0 4.500h2.500L6 1.500v10l-3.500-3H0z" fill="none" stroke="#ddd"/><path d="M8 4.500q1.500 2 0 4M10.500 3q2.500 3.500 0 7M13 1.500q4 5 0 10" fill="none" stroke="#ddd"/></svg>
            <svg width="16" height="14" viewBox="0 0 16 14"><path d="M4 1.500h11.500v8H4zM9.500 10v3M6.500 13h6M.5.500h3v4h-3zM2 5v8" fill="none" stroke="#ddd"/></svg>
            <span class="lang">ไทย</span>
            <time>15:30<br>8/10/2565</time>
            <svg width="17" height="16" viewBox="0 0 17 16"><path d="M.7.700h15.600v11.500H11L8.500 15 6 12.200H.7zM4 4.500h9M4 7.500h9" fill="none" stroke="#ddd" stroke-width="1.200"/></svg>
        </div>
    </footer>
</body>
</html>
```
FILE: styles.css
```css
* {
    box-sizing: border-box;
}

body {
    margin: 0;
    padding: 0 62px 0 66px;
    height: 100vh;
    display: flex;
    flex-direction: column;
    background: #000;
    color: #222;
    font-family: "Open Sans", "Noto Sans", "Noto Sans Thai Looped", "Noto Sans Thai", sans-serif;
    font-size: 12px;
}

a {
    color: inherit;
    text-decoration: none;
}

h2,
h3 {
    margin: 0;
    font-size: 12px;
    font-weight: 600;
}

input,
button,
select {
    font: inherit;
    color: inherit;
    min-width: 0;
}

svg {
    display: block;
    flex: none;
}

.defs {
    position: absolute;
}

.plain {
    display: flex;
    align-items: center;
    justify-content: center;
    padding: 0;
    border: 0;
    background: none;
}

/* browser chrome */
.browser {
    background: #47565d;
    color: #e6eaec;
    border-bottom: 1px solid #8b9498;
}

.titlebar {
    display: flex;
    align-items: stretch;
    height: 34px;
    padding-left: 8px;
    background: #2b363c;
}

.tab {
    display: flex;
    align-items: center;
    gap: 8px;
    width: 240px;
    padding: 0 12px;
    border-radius: 8px 8px 0 0;
    background: #47565d;
}

.tab-title {
    flex: 1;
    overflow: hidden;
    font-size: 11px;
    white-space: nowrap;
    -webkit-mask-image: linear-gradient(to right, #000 85%, transparent);
    mask-image: linear-gradient(to right, #000 85%, transparent);
}

.new-tab {
    width: 44px;
}

.window-buttons {
    display: flex;
    margin-left: auto;
}

.window-buttons button {
    width: 46px;
    padding-bottom: 4px;
}

.navbar {
    display: flex;
    align-items: center;
    height: 36px;
    padding: 0 10px 0 6px;
}

.nav {
    width: 32px;
}

.omnibox {
    display: flex;
    align-items: center;
    gap: 18px;
    flex: 1;
    height: 28px;
    margin: 0 12px 0 6px;
    padding: 0 10px 0 14px;
    border-radius: 14px;
    background: #39454a;
}

.omnibox > svg {
    margin-right: -8px;
}

.omnibox input {
    flex: 1;
    padding: 0;
    border: 0;
    outline: 0;
    background: none;
    font-size: 14px;
}

.omnibox button {
    width: 14px;
}

.ext {
    width: 20px;
    margin-right: 12px;
}

.ext:last-child {
    width: 24px;
    margin: 0;
}

.bookmarks {
    display: flex;
    align-items: center;
    gap: 17px;
    height: 33px;
    padding: 0 15px 2px;
    white-space: nowrap;
}

.bookmarks a {
    display: flex;
    align-items: center;
    gap: 8px;
}

.bookmarks .thai {
    font-size: 11px;
}

/* application */
.app {
    flex: 1;
    min-height: 0;
    display: flex;
    flex-direction: column;
    background: #fcfcfc;
}

.menubar {
    display: flex;
    align-items: center;
    gap: 13px;
    height: 27px;
    padding: 2px 12px 0;
    border-bottom: 1px solid #e0e0e0;
}

.status {
    color: #999;
    font-size: 11px;
}

.toolbar {
    display: flex;
    align-items: center;
    height: 35px;
    border-bottom: 1px solid #dadce0;
    color: #444;
}

.group {
    display: flex;
    align-items: center;
    height: 24px;
    padding: 0 4px 0 5px;
    border-right: 1px solid #e2e2e2;
}

.group:nth-last-child(2) {
    border: 0;
}

.group.first {
    padding-left: 8px;
}

.tool {
    width: 28px;
}

.drop {
    margin-right: 6px;
}

.drop span {
    display: flex;
    justify-content: center;
    width: 26px;
}

.caret {
    width: 8px;
    height: 5px;
    color: #777;
}

.caret.light {
    color: #aaa;
}

.zoom {
    justify-content: space-between;
    width: 47px;
    margin: 0 6px 0 8px;
}

.view-buttons {
    display: flex;
    gap: 6px;
    margin-left: auto;
    padding-right: 15px;
}

.workspace {
    flex: 1;
    min-height: 0;
    display: flex;
}

.sidebar {
    display: flex;
    flex-direction: column;
    width: 192px;
    border-right: 1px solid #e4e4e6;
}

.palettes {
    position: relative;
    flex: 1;
    min-height: 0;
    overflow: hidden;
}

.search {
    display: flex;
    align-items: center;
    height: 26px;
    margin: 11px 16px 6px 7px;
    padding: 0 8px 0 6px;
    border: 1px solid #d8dbe0;
    border-radius: 3px;
    background: #fff;
    font-family: "Liberation Sans", sans-serif;
}

.search input {
    flex: 1;
    padding: 0;
    border: 0;
    outline: 0;
    background: none;
}

.shapes {
    display: grid;
    grid-template-columns: repeat(5, 1fr);
    grid-auto-rows: 31px;
    place-items: center;
}

.shapes > svg {
    width: 28px;
    height: 28px;
    fill: none;
    stroke: #222;
    stroke-width: 1.4;
}

.results {
    margin: 0 22px 0 7px;
}

.general {
    margin: 6px 20px 0 10px;
}

.mini-text {
    font-size: 5px;
}

.mini-heading {
    width: 24px;
    font-size: 2px;
    line-height: 3px;
}

.mini-heading b {
    display: block;
    font-size: 4px;
    line-height: 6px;
}

.more-results {
    display: block;
    width: 89px;
    height: 26px;
    margin: 6px 0 12px 46px;
    padding: 0;
    border: 1px solid #999;
    border-radius: 2px;
    background: #efefef;
    font-family: "Liberation Sans", sans-serif;
}

.section-title {
    display: flex;
    align-items: center;
    gap: 10px;
    height: 32px;
    margin-right: 8px;
    padding: 0 12px 0 1px;
    border-top: 1px solid #e4e4e6;
    border-bottom: 1px solid #e4e4e6;
    color: #777;
}

.section-title h2 {
    flex: 1;
    margin-left: -6px;
    color: #222;
}

.scratch {
    padding: 11px 20px 11px 15px;
}

.drag-here {
    height: 30px;
    border: 2px dotted #c4c4c4;
    border-radius: 8px;
    color: #a6a6a6;
    line-height: 26px;
    text-align: center;
}

.more-shapes {
    display: flex;
    align-items: center;
    gap: 7px;
    height: 34px;
    padding: 2px 14px 0;
    border-top: 1px solid #e0e0e0;
    color: #d0693a;
    font-weight: 600;
}

.thumb {
    position: absolute;
    border-radius: 2px;
    background: #dddde0;
}

.side-thumb {
    top: 2px;
    right: 2px;
    width: 4px;
    height: 56%;
}

.splitter {
    display: flex;
    align-items: center;
    justify-content: center;
    width: 11px;
    border-right: 1px solid #e8e9ec;
}

.splitter::before {
    content: "";
    width: 3px;
    height: 6px;
    border: solid #777;
    border-width: 0 1px;
}

.editor {
    flex: 1;
    min-width: 0;
    display: flex;
    flex-direction: column;
}

.canvas {
    position: relative;
    flex: 1;
    min-height: 0;
    padding: 0 8px 9px 0;
    background: #f8f9fb;
}

.diagram {
    width: 100%;
    height: 100%;
}

.edges path {
    fill: none;
    stroke: #3f8c8f;
    marker-end: url(#arrow);
}

.nodes rect {
    fill: #b0e3e6;
    stroke: #4a9396;
}

.sketch {
    stroke: #35858a;
    stroke-dasharray: 3 2;
}

.selection {
    fill: none;
    stroke: #4fb3cf;
    stroke-dasharray: 3 3;
}

.labels {
    fill: #1c1c1c;
    font-size: 14px;
    text-anchor: middle;
}

.right-thumb {
    top: 28%;
    right: 1px;
    width: 5px;
    height: 26%;
}

.bottom-thumb {
    bottom: 2px;
    left: 30%;
    width: 34%;
    height: 4px;
}

.pages {
    display: flex;
    height: 34px;
    border-top: 1px solid #e0e2e4;
    background: #f1f3f5;
    color: #888;
}

.pages-menu {
    width: 27px;
}

.page {
    width: 124px;
    padding-top: 3px;
    border-right: 1px solid #e2e4e6;
    line-height: 33px;
    text-align: center;
}

.page.active {
    background: #fff;
    color: #d0693a;
    font-weight: 600;
}

.add-page {
    width: 27px;
    border-right: 1px solid #e2e4e6;
}

/* format panel */
.format {
    width: 217px;
    border-left: 1px solid #d5d7da;
    color: #666;
}

.format-tabs {
    display: grid;
    grid-template-columns: repeat(3, 1fr);
    height: 30px;
}

.format-tabs button {
    padding-top: 2px;
    border-right: 1px solid #d8dadd;
    border-bottom: 1px solid #d8dadd;
    background: #eff1f4;
    font-weight: 600;
}

.format-tabs .active {
    border-bottom: 0;
    background: none;
}

.format-tabs button:last-child {
    border-right: 0;
}

.panel {
    padding: 0 15px 0 13px;
    border-bottom: 1px solid #dcdcdc;
}

.font-panel {
    display: flex;
    flex-direction: column;
    height: 172px;
    padding: 11px 15px 0 11px;
}

.font-panel h3 {
    margin: 0 0 5px 2px;
    line-height: 17px;
}

.font-family {
    display: flex;
    justify-content: space-between;
    align-items: stretch;
    height: 21px;
    margin-bottom: 4px;
    padding: 0 0 0 4px;
    border: 1px solid #bbb;
    border-radius: 2px;
    background: #fff;
    color: #888;
    font-size: 11px;
    line-height: 20px;
}

.font-family i {
    display: flex;
    align-items: center;
    justify-content: center;
    width: 28px;
    border-left: 1px solid #ccc;
}

.row {
    position: relative;
    display: flex;
    justify-content: space-between;
    margin-bottom: 5px;
}

.button-set {
    display: flex;
    align-items: center;
    gap: 3px;
}

.btn {
    display: flex;
    align-items: center;
    justify-content: center;
    width: 28px;
    height: 26px;
    padding: 0;
    border: 1px solid #b5b5b5;
    border-radius: 2px;
    background: linear-gradient(#f2f2f2, #dedede);
    color: #111;
    font-family: "DejaVu Sans", sans-serif;
    font-weight: 700;
    font-size: 11px;
}

.btn.on {
    border-color: #8fbbd4;
    background: linear-gradient(#b5e2fb, #8fd0f5);
}

.italic {
    font-family: "Liberation Serif", serif;
    font-size: 15px;
    font-style: italic;
}

.underline {
    text-decoration: underline;
}

.pointer {
    position: absolute;
    top: 8px;
    left: 41px;
}

.number {
    display: flex;
    gap: 1px;
    width: 58px;
    height: 19px;
    color: #222;
    font-family: "Liberation Sans", sans-serif;
}

.number input {
    flex: 1;
    width: 0;
    padding: 0 2px;
    border: 1px solid #b8b8b8;
    border-radius: 2px;
    background: #fff;
    text-align: right;
}

.number svg {
    width: 10px;
    height: 19px;
    border: 1px solid #ccc;
    border-radius: 2px;
}

.number.size {
    width: 59px;
}

.option {
    align-items: center;
    height: 17px;
    padding-left: 2px;
    font-size: 11px;
}

.option label {
    padding-top: 4px;
    color: #888;
}

.option select {
    width: 88px;
    height: 16px;
    padding: 0;
    border: 1px solid #aaa;
    border-radius: 2px;
    background: #fff;
    color: #111;
    font-family: "Liberation Sans", sans-serif;
    font-size: 12px;
    line-height: 14px;
}

.checks {
    padding-top: 5px;
    padding-bottom: 4px;
}

.check {
    display: flex;
    align-items: center;
    gap: 6px;
    height: 22px;
    font-size: 11px;
    font-weight: 600;
}

.check input {
    width: 11px;
    height: 11px;
    margin: 0 0 3px;
    accent-color: #2872dc;
}

.swatch {
    width: 41px;
    height: 19px;
    margin-left: auto;
    padding: 0;
    border: 1px solid #999;
    border-radius: 3px;
    background: #000;
    box-shadow: inset 0 0 0 3px #eee;
}

.formatted {
    padding-top: 2px;
    padding-bottom: 3px;
}

.opacity {
    display: flex;
    align-items: center;
    justify-content: space-between;
    height: 34px;
    font-size: 11px;
    font-weight: 600;
}

.opacity .number {
    font-size: 12px;
    font-weight: 400;
}

.spacing {
    display: grid;
    grid-template-columns: 1fr 58px 58px;
    gap: 3px 6px;
    padding-top: 7px;
    padding-bottom: 1px;
}

.spacing h3 {
    font-size: 11px;
    line-height: 19px;
}

.field {
    width: 58px;
    justify-self: end;
    color: #888;
    font-size: 11px;
    text-align: center;
}

.field .number {
    font-size: 12px;
}

.field label {
    display: block;
    line-height: 21px;
}

/* windows taskbar */
.taskbar {
    display: flex;
    justify-content: space-between;
    height: 40px;
    background: linear-gradient(to right, #1e2021, #3a2d2c 25%, #43312f 60%, #35292b);
    color: #f0f0f0;
}

.tasks {
    display: grid;
    grid-template-columns: repeat(9, 1fr);
    width: 446px;
}

.tasks .open {
    border: solid #7fb4e2;
    border-width: 0 0 2px;
    margin: 0 4px;
    padding-top: 2px;
}

.tasks .focused {
    margin: 0;
    background: #6a5c5b;
}

.line-logo {
    fill: #0bb60b;
    font-size: 5px;
    font-weight: 700;
}

.tray {
    display: flex;
    align-items: center;
    gap: 12px;
    padding-right: 26px;
}

.tray > svg {
    margin-right: -3px;
}

.tray time {
    margin-right: 6px;
    line-height: 18px;
    text-align: center;
}
```
